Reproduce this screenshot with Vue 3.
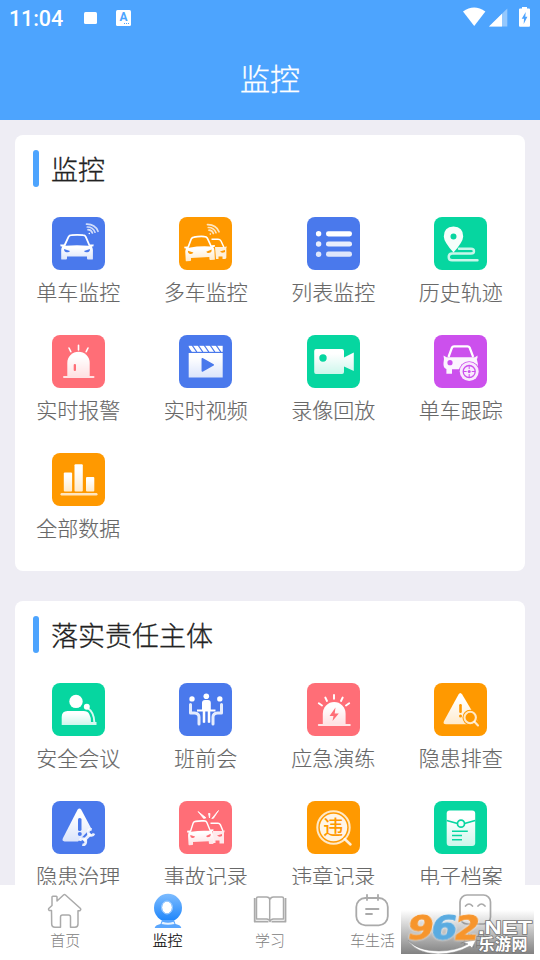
<script setup>
const sections = [
  {
    title: '监控',
    items: [
      { label: '单车监控', icon: 'car', tone: 'blue' },
      { label: '多车监控', icon: 'cars', tone: 'orange' },
      { label: '列表监控', icon: 'list', tone: 'blue' },
      { label: '历史轨迹', icon: 'track', tone: 'green' },
      { label: '实时报警', icon: 'alarm', tone: 'red' },
      { label: '实时视频', icon: 'video', tone: 'blue' },
      { label: '录像回放', icon: 'camera', tone: 'green' },
      { label: '单车跟踪', icon: 'follow', tone: 'purple' },
      { label: '全部数据', icon: 'chart', tone: 'orange' },
    ],
  },
  {
    title: '落实责任主体',
    items: [
      { label: '安全会议', icon: 'speaker', tone: 'green' },
      { label: '班前会', icon: 'meeting', tone: 'blue' },
      { label: '应急演练', icon: 'drill', tone: 'red' },
      { label: '隐患排查', icon: 'inspect', tone: 'orange' },
      { label: '隐患治理', icon: 'repair', tone: 'blue' },
      { label: '事故记录', icon: 'crash', tone: 'red' },
      { label: '违章记录', icon: 'violation', tone: 'orange', mark: '违' },
      { label: '电子档案', icon: 'archive', tone: 'green' },
    ],
  },
]

const tabs = [
  { label: '首页', icon: 'home' },
  { label: '监控', icon: 'webcam', active: true },
  { label: '学习', icon: 'book' },
  { label: '车生活', icon: 'calendar' },
  { label: '我的', icon: 'face' },
]
</script>

<template>
  <div class="screen">
    <svg class="defs" width="0" height="0" aria-hidden="true">
      <defs>
        <linearGradient id="fade" x1="0" y1="0" x2="0" y2="1">
          <stop offset="0.2" stop-color="#fff" />
          <stop offset="1" stop-color="#fff" stop-opacity=".8" />
        </linearGradient>
        <linearGradient id="cam" x1="0" y1="0" x2="0" y2="1">
          <stop offset="0" stop-color="#7dbcff" />
          <stop offset="1" stop-color="#1b84fb" />
        </linearGradient>
        <g id="wifi" fill="none" stroke="#fff" stroke-opacity=".75" stroke-width="1.7" stroke-linecap="round">
          <path d="M34.500 7.200 Q43 7 46 14.300" />
          <path d="M35.300 10 Q41 10 43 15.200" />
          <path d="M36 12.700 Q39.300 12.800 40.400 16" />
          <circle cx="37.300" cy="16.500" r=".8" fill="#fff" stroke="none" />
        </g>
        <g id="vehicle">
          <path d="M12.500 28.500 L16.500 19.800 Q17.300 18.300 19.500 18.200 Q25 17.500 31 18.200 Q33 18.300 33.800 19.800 L37.500 28.500" fill="none" stroke="#fff" stroke-width="1.800" />
          <path d="M8.200 27.500 H12 L13.500 28.800 Q25 27.600 36.500 28.800 L38 27.500 H41.800 L41.300 29.500 H39.800 Q40.900 31 40.900 33 V42 Q40.900 42.600 40 42.600 H36 Q35 42.600 35 41.500 V39.600 H15 V41.500 Q15 42.600 14 42.600 H10 Q9.200 42.600 9.200 42 V33 Q9.200 31 10.300 29.500 H8.700 Z" fill="url(#fade)" />
          <path d="M12 32 L18 34 Q17 36 13.500 35 Q12 34.500 12 32 Z M38 32 L32 34 Q33 36 36.500 35 Q38 34.500 38 32 Z" fill="currentColor" />
        </g>
      </defs>

      <symbol id="car" viewBox="0 0 53 53">
        <use href="#wifi" /><use href="#vehicle" />
      </symbol>
      <symbol id="cars" viewBox="0 0 53 53">
        <use href="#wifi" transform="translate(-6 .5)" />
        <path d="M32.500 22.200 H39 Q41 22.200 42 24 L45 30.500" fill="none" stroke="#fff" stroke-width="1.500" />
        <path d="M36 30 H45 L48 29.500 L47.300 31 Q47.500 33 47.300 41 Q47 42 45.500 42 H43.500 V39.500 H39.500 V42 H37 Z" fill="#fff" fill-opacity=".85" />
        <path d="M46 33 L41 34.500 Q42.500 36.500 46 35 Z" fill="currentColor" />
        <g transform="translate(-2.300 2.200) rotate(-3 22 30) scale(.92 .97)"><use href="#vehicle" /></g>
      </symbol>
      <symbol id="list" viewBox="0 0 53 53">
        <g fill="#fff">
          <circle cx="11.600" cy="16.800" r="2.700" /><rect x="19" y="14.200" width="26" height="5.200" rx="2.400" />
          <g opacity=".88"><circle cx="11.600" cy="27" r="2.700" /><rect x="19" y="24.400" width="26" height="5.200" rx="2.400" /></g>
          <g opacity=".82"><circle cx="11.600" cy="37.200" r="2.700" /><rect x="19" y="34.600" width="26" height="5.200" rx="2.400" /></g>
        </g>
      </symbol>
      <symbol id="track" viewBox="0 0 53 53">
        <path d="M25 31.700 H37 Q40 31.700 40 34.200 Q40 36.500 37 36.500 H18 Q14.700 36.700 14.700 40 Q14.700 43.300 18 43.300 H43.500" fill="none" stroke="#fff" stroke-opacity=".78" stroke-width="2.400" stroke-linecap="round" />
        <path fill-rule="evenodd" d="M19.500 9.500 Q9.700 10 9.800 19.500 Q9.900 25 19.500 35.500 Q29 25 29.200 19.500 Q29.300 10 19.500 9.500 Z M19.500 16.500 A3 3 0 1 1 19.500 22.500 A3 3 0 1 1 19.500 16.500 Z" fill="#fff" fill-opacity=".96" />
      </symbol>
      <symbol id="alarm" viewBox="0 0 53 53">
        <path d="M26.500 10.300 V15 M17 13 L18.800 16.700 M36 13 L34.200 16.700" stroke="#fff" stroke-width="1.600" stroke-linecap="round" />
        <path d="M15.300 41 V28 A11.200 11.200 0 0 1 37.700 28 V41 Z" fill="url(#fade)" />
        <rect x="11" y="41" width="31.500" height="2.100" rx="1" fill="#fff" fill-opacity=".8" />
        <rect x="21.700" y="29" width="2.300" height="7" rx="1" fill="currentColor" />
      </symbol>
      <symbol id="video" viewBox="0 0 53 53">
        <rect x="9.700" y="10.800" width="34" height="6" fill="#fff" />
        <path d="M9.500 17 L9 12 L12.200 17 Z M13 10 L17.800 17 M19 10 L23.800 17 M25 10 L29.800 17 M31 10 L35.800 17 M37 10 L41.800 17" fill="currentColor" stroke="currentColor" stroke-width="1.300" />
        <path d="M9.700 18 H43.700 V42.500 H9.700 Z" fill="url(#fade)" />
        <path d="M23.300 23.700 L34.300 29.800 L23.300 36 Z" fill="currentColor" stroke="currentColor" stroke-width="1.500" stroke-linejoin="round" />
      </symbol>
      <symbol id="camera" viewBox="0 0 53 53">
        <path fill-rule="evenodd" d="M9 14 H35 Q37 14 37 16 V22.500 L46.800 17.500 V36 L37 31.500 V37 Q37 39 35 39 H9 Q7.200 39 7.200 37 V16 Q7.200 14 9 14 Z M16 19.300 A3.700 3.700 0 1 0 16 26.700 A3.700 3.700 0 1 0 16 19.300 Z" fill="url(#fade)" />
      </symbol>
      <symbol id="follow" viewBox="0 0 53 53">
        <path d="M14.500 22 L18 12.500 Q18.500 11.300 20 11.300 H33.500 Q35 11.300 35.600 12.500 L39.200 22" fill="none" stroke="#fff" stroke-width="2.200" />
        <path d="M9.500 20.500 L12.500 22.300 H41 L43.500 20.500 V23 L42.800 24 Q44.500 28 43.500 34 L27 34.300 H18 V38.800 H12.400 V34 Q9 33 9.500 28 L10 24 Z" fill="#fff" fill-opacity=".94" />
        <circle cx="16" cy="27.700" r="2.600" fill="currentColor" />
        <circle cx="35.200" cy="36.500" r="10.300" fill="currentColor" />
        <circle cx="35.200" cy="36.500" r="9.500" fill="#fff" fill-opacity=".88" />
        <circle cx="35.200" cy="36.500" r="6" fill="none" stroke="currentColor" stroke-width="1.300" />
        <path d="M35.200 30.500 V34 M35.200 39 V42.500 M29.200 36.500 H32.700 M37.700 36.500 H41.200" stroke="currentColor" stroke-width="1" />
        <circle cx="35.200" cy="36.500" r="1.500" fill="currentColor" />
      </symbol>
      <symbol id="chart" viewBox="0 0 53 53">
        <g fill="url(#fade)">
          <rect x="11.800" y="19.500" width="8.300" height="19" rx="1" /><rect x="22.500" y="11.300" width="8.300" height="27.200" rx="1" /><rect x="34" y="24" width="8.300" height="14.500" rx="1" />
        </g>
        <rect x="8.500" y="40" width="37" height="2.400" rx="1.200" fill="#fff" fill-opacity=".75" />
      </symbol>
      <symbol id="speaker" viewBox="0 0 53 53">
        <circle cx="24" cy="18.400" r="6.700" fill="#fff" />
        <path d="M9.700 42 V34 Q9.700 28 15.500 28 H31.500 Q36 28 37.200 31 Q39 34 39 39 H44.500 V42 Z" fill="url(#fade)" />
        <path d="M35.500 25 Q42 29 42.300 39" fill="none" stroke="#fff" stroke-opacity=".85" stroke-width="2" />
        <circle cx="34.800" cy="23.800" r="3" fill="#fff" />
      </symbol>
      <symbol id="meeting" viewBox="0 0 53 53">
        <g fill="#fff">
          <circle cx="27.300" cy="13.200" r="2.800" /><circle cx="13" cy="15.900" r="2.700" /><circle cx="40.800" cy="15.900" r="2.700" />
          <path d="M23 26.500 V20 Q23 17 26 17 H29 Q31.800 17 31.800 20 V26.500 H36.500 V28.500 H18 V26.500 Z" />
        </g>
        <path d="M24 28 V39.500 H26 V28 M29 28 V39.500 H31 V28" fill="#fff" stroke="#fff" stroke-opacity=".75" stroke-width=".7" />
        <path d="M11.500 21.500 V30 H15.500 Q20 30.500 20 34 V41 M42.500 21.500 V30 H38.500 Q34 30.500 34 34 V41" fill="none" stroke="#fff" stroke-opacity=".86" stroke-width="3" stroke-linecap="round" stroke-linejoin="round" />
      </symbol>
      <symbol id="drill" viewBox="0 0 53 53">
        <path d="M27 12 V15.800 M18.300 14.500 L20 18 M11.800 20.200 L15 22.500 M35.700 14.500 L34 18 M42.200 20.200 L39 22.500" stroke="#fff" stroke-width="1.900" stroke-linecap="round" />
        <path d="M15.800 41 V30.500 A11.400 11.400 0 0 1 38.600 30.500 V41 Z" fill="url(#fade)" />
        <path d="M28.500 24.500 L22.500 33 H26.500 L25.500 38 L31.800 30.500 H27.700 Z" fill="currentColor" />
        <rect x="10.800" y="41" width="33" height="2" rx="1" fill="#fff" fill-opacity=".82" />
      </symbol>
      <symbol id="inspect" viewBox="0 0 53 53">
        <path d="M24.500 11.500 Q26.300 8.500 28.200 11.500 L44 38 Q45 41.300 42 41.300 H12 Q8.500 41.300 10 38 Z" fill="url(#fade)" />
        <rect x="25.200" y="21" width="2.600" height="9" rx="1.200" fill="currentColor" /><circle cx="26.500" cy="33" r="1.500" fill="currentColor" />
        <path d="M36.200 34.500 L48 46" stroke="currentColor" stroke-width="6" /><circle cx="36.200" cy="34.500" r="7.700" fill="currentColor" />
        <g stroke="#fff" stroke-opacity=".78" stroke-width="2.100" fill="none"><circle cx="36.200" cy="34.500" r="5.700" /><path d="M40.500 38.800 L44 42.500" stroke-linecap="round" /></g>
      </symbol>
      <symbol id="repair" viewBox="0 0 53 53">
        <path d="M25.500 8.800 Q27.500 6 29.300 8.800 L39 27 L26 40.500 H12.500 Q9.500 40 11 37 Z" fill="url(#fade)" />
        <rect x="26" y="17" width="3.500" height="13" rx="1.600" fill="currentColor" /><circle cx="27.800" cy="33" r="2" fill="currentColor" />
        <path d="M30 41.500 L39 32" stroke="currentColor" stroke-width="6" />
        <path d="M31.500 40 L38.700 32.600" stroke="#fff" stroke-opacity=".88" stroke-width="3.200" />
        <path d="M39.800 28.500 A3 3 0 1 0 42 32.500 M28 39.800 A3 3 0 1 1 30.300 43.700" fill="none" stroke="#fff" stroke-opacity=".88" stroke-width="2.600" />
      </symbol>
      <symbol id="crash" viewBox="0 0 53 53">
        <path d="M19 10.500 L27 16.800 L24.700 17.500 Z M39.500 9.500 L32.800 17.500 L34.500 17.200 Z M29.500 12.500 L30.500 17 L31 12.500 Z" fill="#fff" stroke="#fff" stroke-width=".8" />
        <path d="M31.500 22.300 H39 Q40.500 22.300 41.500 24 L44 30" fill="none" stroke="#fff" stroke-width="1.500" />
        <path d="M34 30 H43 L45.800 29.500 L45 32 V42.500 H40.500 V39.500 H36.500 V42 H34 Z" fill="#fff" fill-opacity=".86" />
        <path d="M43 33 L38 34.500 Q40 36.500 43 35 Z" fill="currentColor" />
        <g transform="translate(1.700 2.800) rotate(-3 17 30) scale(.79 .96)"><use href="#vehicle" /></g>
      </symbol>
      <symbol id="violation" viewBox="0 0 53 53">
        <circle cx="26.500" cy="26.500" r="16.200" fill="none" stroke="#fff" stroke-opacity=".78" stroke-width="2" />
        <circle cx="26.500" cy="26.500" r="13.700" fill="#fff" fill-opacity=".9" />
        <path d="M37.700 38 L43.500 43.500" stroke="#fff" stroke-opacity=".85" stroke-width="2.500" stroke-linecap="round" />
      </symbol>
      <symbol id="archive" viewBox="0 0 53 53">
        <rect x="12.700" y="9.500" width="28.500" height="35.500" rx="3" fill="url(#fade)" />
        <path d="M12.700 19.500 L23.500 22.500 M30.500 22.500 L41.200 19.500" stroke="currentColor" stroke-width="1.800" />
        <circle cx="27" cy="22.700" r="3.500" fill="none" stroke="currentColor" stroke-width="1.700" />
        <path d="M18 30.200 H33.800 M18 34.500 H28 M18 38.800 H28" stroke="currentColor" stroke-width="1.600" />
      </symbol>

      <symbol id="home" viewBox="0 0 36 36">
        <path d="M4.500 17.500 H2.200 Q1 16.500 2 15.300 L5 12.500 V4 Q5 3.200 5.800 3.200 H9.300 Q10 3.200 10 4 V8 L16.500 2 Q17.500 1.200 18.500 2 L33.500 15.500 Q34.300 16.700 33 17.700 H31 V31 Q31 34.200 28 34.200 H23.500 V24 Q23.500 22 21.500 22 H15.500 Q13.500 22 13.500 24 V34.200 H8 Q4.700 34.200 4.700 31 Z" fill="none" stroke="#aaa" stroke-width="1.500" stroke-linejoin="round" />
      </symbol>
      <symbol id="webcam" viewBox="0 0 36 36">
        <circle cx="18" cy="14.800" r="14" fill="url(#cam)" />
        <path d="M12 27 L10.500 31 Q5 32 4.700 35 H31.300 Q31 32 25.500 31 L24 27 Z" fill="#5aa6fd" />
        <path d="M12.500 28.800 Q18 30.500 23.500 28.800 L24.500 31 Q18 32.500 11.500 31 Z" fill="#e8f3ff" />
        <ellipse cx="17" cy="14.500" rx="4.900" ry="6" fill="#fff" /><ellipse cx="17" cy="14.500" rx="5.500" ry="6.500" fill="none" stroke="#9ccbff" stroke-width="1" />
      </symbol>
      <symbol id="book" viewBox="0 0 36 36">
        <g fill="none" stroke="#aaa" stroke-linejoin="round">
          <path d="M17.700 28 V6.500 Q17.500 4 14.500 4 H6 Q4.500 4 4.500 5.500 V26 H14.500 Q17.500 26.200 18 28.500 Q18.500 26.200 21.500 26 H31.500 V5.500 Q31.500 4 30 4 H21.500 Q18.500 4 18.300 6.500" stroke-width="1.500" />
          <path d="M2.700 5 V28.700 H16.500 M19.500 28.700 H33.500 V5" stroke-width="1.800" />
        </g>
      </symbol>
      <symbol id="calendar" viewBox="0 0 36 36">
        <g fill="none" stroke="#aaa" stroke-width="1.800" stroke-linecap="round"><rect x="2.300" y="5" width="31.500" height="27.300" rx="9" /><path d="M13 1.800 V7 M24 1.800 V7 M12 16 H24.500 M12 21 H18" /></g>
      </symbol>
      <symbol id="face" viewBox="0 0 36 36">
        <g fill="none" stroke="#aaa" stroke-width="1.700" stroke-linecap="round"><rect x="3" y="2" width="30.500" height="29" rx="7" /><path d="M8.500 13 Q12 9 15.500 13 M21 13 Q24.500 9 28 13" /></g>
      </symbol>
    </svg>

    <header class="header">
      <div class="status">
        <span class="clock">11:04</span>
        <span class="status-square"></span>
        <span class="status-input">A</span>
        <svg class="status-right" viewBox="0 0 68 20">
          <path d="M0 4.500 Q11 -3.500 22.400 4.500 L11.200 19 Z" fill="#fff" />
          <path d="M26 19.500 L44.300 1.500 V19.500 Z" fill="#fff" fill-opacity=".4" /><path d="M26 19.500 L39 6.700 V19.500 Z" fill="#fff" />
          <path d="M57 1.500 H59 V0 H64 V1.500 H66 Q67 1.500 67 2.500 V18.500 Q67 19.800 66 19.800 H57 Q56 19.800 56 18.500 V2.500 Q56 1.500 57 1.500 Z" fill="#fff" />
          <path d="M62.700 5 L58.700 11.800 H61 L60.700 17 L64.400 9.700 H62.300 Z" fill="#4da4fe" />
        </svg>
      </div>
      <h1 class="title">监控</h1>
    </header>

    <main class="content">
      <section v-for="section in sections" :key="section.title" class="card">
        <h2 class="card-title"><span>{{ section.title }}</span></h2>
        <div class="grid">
          <div v-for="item in section.items" :key="item.label" class="item">
            <div class="tile" :class="item.tone">
              <svg viewBox="0 0 53 53"><use :href="'#' + item.icon" /></svg>
              <span v-if="item.mark" class="mark">{{ item.mark }}</span>
            </div>
            <span class="label">{{ item.label }}</span>
          </div>
        </div>
      </section>
    </main>

    <nav class="tabs">
      <div v-for="tab in tabs" :key="tab.label" class="tab" :class="{ active: tab.active }">
        <svg viewBox="0 0 36 36"><use :href="'#' + tab.icon" /></svg>
        <span>{{ tab.label }}</span>
      </div>
    </nav>

    <svg class="watermark" viewBox="0 0 133 44">
      <defs>
        <linearGradient id="shade" x1="0" y1="0" x2="0" y2="1"><stop offset="0" stop-color="#777" stop-opacity="0" /><stop offset="1" stop-color="#777" stop-opacity=".92" /></linearGradient>
      </defs>
      <rect width="133" height="44" fill="url(#shade)" />
      <path d="M7 30 Q16 41 38 41 Q55 41 67 34 L62 32 L75 30 L71 38 L69 36 Q54 44 37 44 Q14 43 7 30 Z" fill="#fff" stroke="#888" stroke-width=".5" />
      <g class="digits" transform="translate(6 0) skewX(-10)">
        <text x="4" y="29.500" textLength="26" lengthAdjust="spacingAndGlyphs" fill="#f7952c" stroke="#f7952c">9</text>
        <text x="27.500" y="29.500" textLength="26" lengthAdjust="spacingAndGlyphs" fill="#5aabe0" stroke="#5aabe0">6</text>
        <text x="51" y="29.500" textLength="25" lengthAdjust="spacingAndGlyphs" fill="#f7952c" stroke="#f7952c">2</text>
      </g>
      <text class="domain" x="77" y="23.500" textLength="54" lengthAdjust="spacingAndGlyphs">.NET</text>
      <text class="brand" x="77.500" y="40" textLength="49">乐游网</text>
    </svg>
  </div>
</template>

<style>
body {
  margin: 0;
}
</style>

<style scoped>
.screen {
  position: relative;
  display: flex;
  flex-direction: column;
  width: 540px;
  height: 960px;
  overflow: hidden;
  background: #eeedf4;
  font-family: "Noto Sans CJK SC", sans-serif;
  font-weight: 300;
}
.defs {
  position: absolute;
}
.header {
  flex: none;
  height: 120px;
  background: #4da4fe;
  color: #fff;
}
.status {
  display: flex;
  align-items: center;
  height: 37px;
  padding: 0 9px 0 9px;
}
.clock {
  width: 54px;
  font: 500 21.500px/37px Roboto, sans-serif;
  letter-spacing: -0.1px;
}
.status-square {
  width: 13px;
  height: 12px;
  margin: -1px 0 0 21px;
  border-radius: 1.500px;
  background: #fff;
}
.status-input {
  width: 15px;
  height: 16px;
  margin: -1px 0 0 19px;
  border-radius: 1.500px;
  background: linear-gradient(90deg, #fff 8px, transparent 8px 9px, #fff 9px 10px, transparent 10px 11px, #fff 11px 12px, transparent 12px 13px, #fff 13px) 0 13px / 15px 1px no-repeat,
    linear-gradient(#fff, #fff) 0 0 / 15px 13px no-repeat,
    linear-gradient(#fff, #fff) 0 14px / 15px 2px no-repeat;
  color: #4da4fe;
  font: 700 12px/15px Roboto, sans-serif;
  text-align: center;
}
.status-right {
  width: 68px;
  height: 20px;
  margin: -3px 0 0 auto;
}
.title {
  margin: 18px 0 0;
  font-size: 30px;
  line-height: 44px;
  font-weight: 300;
  text-align: center;
  -webkit-text-stroke: 0.3px;
}
.content {
  flex: 1;
  min-height: 0;
  overflow: hidden;
  padding: 15px 15px 0;
}
.card {
  box-sizing: border-box;
  height: 436px;
  margin-bottom: 30px;
  padding-top: 15px;
  border-radius: 8px;
  background: #fff;
}
.card-title {
  display: flex;
  align-items: center;
  gap: 12px;
  height: 37px;
  margin: 0 0 30px 18px;
  color: #222;
  font-size: 27px;
  line-height: 37px;
  font-weight: 300;
  -webkit-text-stroke: 0.3px;
}
.card-title span {
  padding-bottom: 1px;
}
.card-title::before {
  content: "";
  width: 6px;
  height: 37px;
  border-radius: 3px;
  background: #4da4fe;
}
.grid {
  display: grid;
  grid-template-columns: repeat(4, 127.5px);
  grid-auto-rows: 118px;
  margin-left: -0.5px;
}
.item {
  display: flex;
  flex-direction: column;
  align-items: center;
}
.tile {
  position: relative;
  width: 53px;
  height: 53px;
  border-radius: 8px;
  background: currentColor;
}
.tile svg {
  display: block;
  width: 53px;
  height: 53px;
}
.mark {
  position: absolute;
  inset: 0;
  font-size: 20px;
  line-height: 52px;
  font-weight: 500;
  text-align: center;
}
.blue { color: #4a79ec; }
.orange { color: #ff9900; }
.green { color: #06d6a0; }
.red { color: #ff6e77; }
.purple { color: #cc50ed; }
.label {
  margin-top: 5px;
  color: #686868;
  font-size: 21px;
  line-height: 32px;
  -webkit-text-stroke: 0.15px;
}
.tabs {
  flex: none;
  display: flex;
  height: 75px;
  padding: 0 14px;
  background: #fff;
}
.tab {
  flex: 1;
  display: flex;
  flex-direction: column;
  align-items: center;
  padding-top: 8px;
  color: #808080;
  font-size: 15px;
  line-height: 22px;
}
.tab svg {
  width: 36px;
  height: 36px;
}
.tab.active {
  color: #111;
  -webkit-text-stroke: 0.2px;
}
.watermark {
  position: absolute;
  left: 401px;
  top: 910px;
  width: 133px;
  height: 44px;
}
.digits {
  font: 700 33px "DejaVu Sans", sans-serif;
  stroke-width: 0.8px;
  filter: drop-shadow(0 0 1px #fff);
}
.domain {
  font: 700 19px "Liberation Sans", sans-serif;
  fill: #fff;
  stroke: #777;
  stroke-width: 1.500px;
  paint-order: stroke;
}
.brand {
  font: 700 16px "Noto Sans CJK SC", sans-serif;
  fill: #fff;
  stroke: #777;
  stroke-width: 1.500px;
  paint-order: stroke;
}
</style>
